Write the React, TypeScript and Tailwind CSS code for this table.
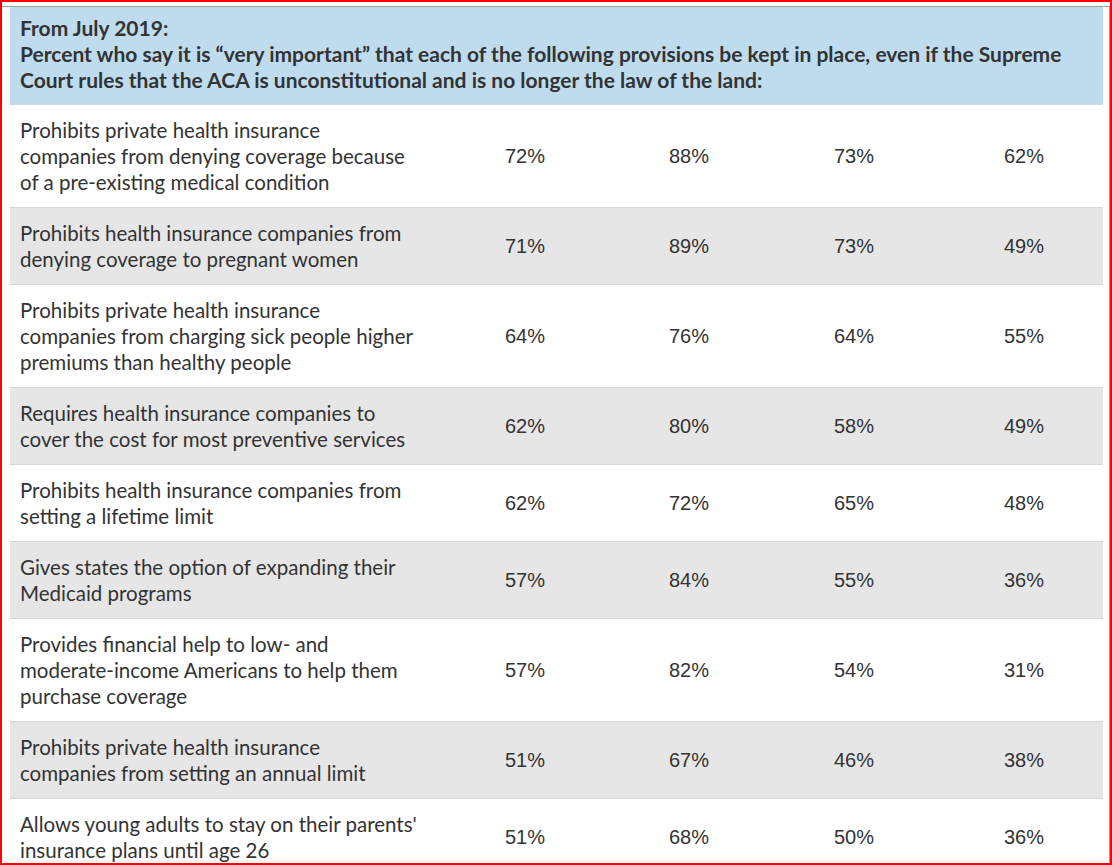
const rows = [
  {
    lines: ["Prohibits private health insurance", "companies from denying coverage because", "of a pre-existing medical condition"],
    values: ["72%", "88%", "73%", "62%"],
  },
  {
    lines: ["Prohibits health insurance companies from", "denying coverage to pregnant women"],
    values: ["71%", "89%", "73%", "49%"],
  },
  {
    lines: ["Prohibits private health insurance", "companies from charging sick people higher", "premiums than healthy people"],
    values: ["64%", "76%", "64%", "55%"],
  },
  {
    lines: ["Requires health insurance companies to", "cover the cost for most preventive services"],
    values: ["62%", "80%", "58%", "49%"],
  },
  {
    lines: ["Prohibits health insurance companies from", "setting a lifetime limit"],
    values: ["62%", "72%", "65%", "48%"],
  },
  {
    lines: ["Gives states the option of expanding their", "Medicaid programs"],
    values: ["57%", "84%", "55%", "36%"],
  },
  {
    lines: ["Provides financial help to low- and", "moderate-income Americans to help them", "purchase coverage"],
    values: ["57%", "82%", "54%", "31%"],
  },
  {
    lines: ["Prohibits private health insurance", "companies from setting an annual limit"],
    values: ["51%", "67%", "46%", "38%"],
  },
  {
    lines: ["Allows young adults to stay on their parents'", "insurance plans until age 26"],
    values: ["51%", "68%", "50%", "36%"],
  },
]

export default function App() {
  return (
    <div className="w-[1112px] h-[865px] overflow-hidden bg-white border-2 border-[#ff0000]">
      <div className="mt-[4px] h-full border-t border-r border-[#a0a0a0] pl-[8px] pr-[6px]">
        <div
          className="text-[#333333]"
          style={{ fontFamily: "Lato, 'Noto Sans', sans-serif" }}
        >
          {/* header */}
          <div className="bg-[#bfdcef] pl-[10px] pt-[8px] pb-[11px] text-[21px] leading-[26px] font-bold whitespace-nowrap">
            From July 2019:
            <br />
            Percent who say it is “very important” that each of the following provisions be kept in place, even if the Supreme
            <br />
            Court rules that the ACA is unconstitutional and is no longer the law of the land:
          </div>

          {rows.map((row, i) => (
            <div
              key={i}
              className={`grid grid-cols-[485px_164px_165px_170px_1fr] border-t border-[#d6d6d6] ${
                i % 2 === 1 ? "bg-[#e6e6e6]" : "bg-white"
              }`}
            >
              <div className="pl-[10px] py-[12px] text-[20.5px] leading-[26px] whitespace-nowrap">
                {row.lines.map((l, j) => (
                  <div key={j}>{l}</div>
                ))}
              </div>
              {row.values.map((v, j) => (
                <div
                  key={j}
                  className="flex items-center pl-[10px] text-[20px]"
                  style={{ fontFamily: "'Liberation Sans', Arial, sans-serif" }}
                >
                  {v}
                </div>
              ))}
            </div>
          ))}
        </div>
      </div>
    </div>
  )
}
